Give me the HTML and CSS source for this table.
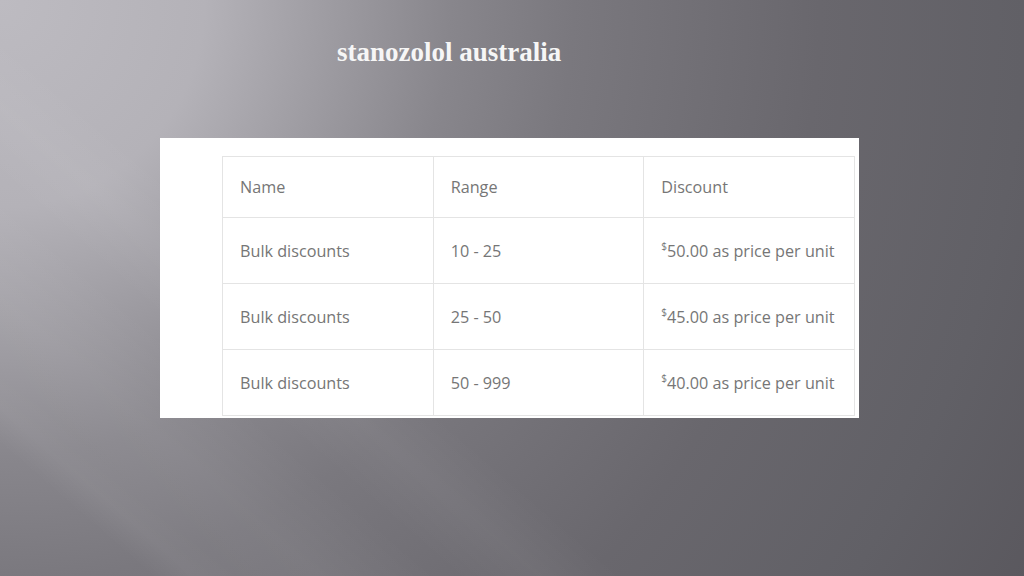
FILE: index.html
```html
<!DOCTYPE html>
<html lang="en">
<head>
<meta charset="utf-8">
<title>stanozolol australia</title>
<link rel="stylesheet" href="styles.css">
</head>
<body>
<main class="slide">
  <h1 class="title">stanozolol australia</h1>
  <figure class="card">
    <table class="prices">
      <tr><td>Name</td><td>Range</td><td>Discount</td></tr>
      <tr><td>Bulk discounts</td><td>10 - 25</td><td><sup>$</sup>50.00 as price per unit</td></tr>
      <tr><td>Bulk discounts</td><td>25 - 50</td><td><sup>$</sup>45.00 as price per unit</td></tr>
      <tr><td>Bulk discounts</td><td>50 - 999</td><td><sup>$</sup>40.00 as price per unit</td></tr>
    </table>
  </figure>
</main>
</body>
</html>
```
FILE: styles.css
```css
html, body {
  margin: 0;
  padding: 0;
}
.slide {
  width: 1024px;
  height: 576px;
  overflow: hidden;
  box-sizing: border-box;
  padding-top: 36px;
  background:
    linear-gradient(41deg, rgba(255,255,255,0) 0%, rgba(255,255,255,0) 9%, rgba(255,255,255,0.055) 11.5%, rgba(255,255,255,0.04) 14%, rgba(255,255,255,0.05) 19%, rgba(255,255,255,0) 26%),
    linear-gradient(41deg, rgba(255,255,255,0) 27%, rgba(255,255,255,0.04) 32%, rgba(255,255,255,0) 37%),
    radial-gradient(1024px 1037px at 0% 0%, #bdbbc1 0%, #b4b2b8 20%, #88868c 44%, #7a787e 56%, #69676d 80%, #616066 100%, #5a585e 115%);
  background-color: #5a585e;
}
.title {
  margin: 0 0 0 337px;
  font-family: "Liberation Serif", "Times New Roman", serif;
  font-weight: bold;
  font-size: 27px;
  line-height: 32px;
  color: #f6f6f6;
}
.card {
  margin: 70px 0 0 160px;
  width: 699px;
  height: 280px;
  box-sizing: border-box;
  padding: 18px 4px 0 62px;
  background: #ffffff;
}
.prices {
  width: 633px;
  border-collapse: collapse;
  font-family: "Open Sans", "DejaVu Sans", sans-serif;
  font-size: 16.2px;
  color: #767676;
}
.prices td {
  width: 211px;
  border: 1px solid #e4e4e4;
  padding: 0 0 0 17px;
  height: 66px;
  box-sizing: border-box;
  vertical-align: middle;
}
.prices tr:first-child td {
  height: 61px;
}
.prices sup {
  font-size: 10px;
  vertical-align: 7px;
  line-height: 0;
}
```
